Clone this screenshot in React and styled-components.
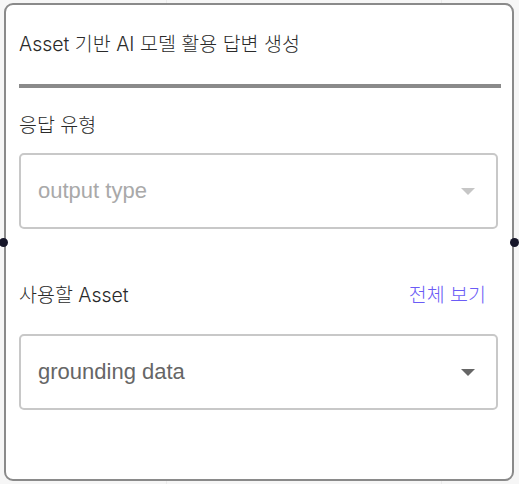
import styled, { createGlobalStyle } from "styled-components"

const GlobalStyle = createGlobalStyle`
    html, body {
        margin: 0;
        padding: 0;
        background-color: #f6f6f6;
    }
    body {
        font-family: Inter, "Noto Sans CJK KR", sans-serif;
        color: #2a2a2a;
    }
`

const Canvas = styled.div`
    width: 519px;
    height: 484px;
    box-sizing: border-box;
    padding: 3px 5px 3px 4px;
    background-image:
        linear-gradient(to right, transparent 166px, #ebebeb 166px, #ebebeb 167px, transparent 167px),
        linear-gradient(to right, transparent 441px, #ebebeb 441px, #ebebeb 442px, transparent 442px);
`

const NodeCard = styled.div`
    position: relative;
    height: 100%;
    box-sizing: border-box;
    background: #fff;
    border: 2px solid #8a8a8a;
    border-radius: 9px;
    padding: 0 14px 0 13px;
    display: flex;
    flex-direction: column;
`

const Handle = styled.span`
    position: absolute;
    top: 233px;
    width: 9px;
    height: 9px;
    border-radius: 50%;
    background: #161629;
    ${p => p.side === "left" ? "left: -7px;" : "right: -7px;"}
`

const Title = styled.div`
    font-size: 19.5px;
    font-weight: 300;
    padding-top: 27px;
    line-height: 24px;
    padding-bottom: 28px;
    border-bottom: 4px solid #8a8a8a;
    margin-right: -3px;
`

const Field = styled.div`
    display: flex;
    flex-direction: column;
    margin-top: ${p => p.top}px;
`

const LabelRow = styled.div`
    display: flex;
    justify-content: space-between;
    align-items: center;
    font-size: 19.5px;
    font-weight: 300;
    line-height: 24px;
`

const LinkText = styled.span`
    color: #6b5cf6;
    margin-right: 12px;
`

const SelectBox = styled.div`
    margin-top: ${p => p.gap}px;
    height: 76px;
    box-sizing: border-box;
    border: 2px solid #c8c8c8;
    border-radius: 5px;
    display: flex;
    align-items: center;
    justify-content: space-between;
    padding: 0 21px 0 17px;
    font-family: "Liberation Sans", Arial, sans-serif;
    font-size: 22px;
    color: ${p => p.placeholder ? "#a9a9a9" : "#666"};
`

const Caret = styled.span`
    width: 0;
    height: 0;
    border-left: 7px solid transparent;
    border-right: 7px solid transparent;
    border-top: 7px solid ${p => p.light ? "#c6c6c6" : "#666"};
`

function App() {
    return (
        <Canvas>
            <GlobalStyle />
            <NodeCard>
                <Handle side="left" />
                <Handle side="right" />
                <Title>Asset 기반 AI 모델 활용 답변 생성</Title>

                <Field top={25}>
                    <LabelRow>
                        <span>응답 유형</span>
                    </LabelRow>
                    <SelectBox gap={16} placeholder="1">
                        <span>output type</span>
                        <Caret light />
                    </SelectBox>
                </Field>

                <Field top={54}>
                    <LabelRow>
                        <span>사용할 Asset</span>
                        <LinkText>전체 보기</LinkText>
                    </LabelRow>
                    <SelectBox gap={27}>
                        <span>grounding data</span>
                        <Caret />
                    </SelectBox>
                </Field>
            </NodeCard>
        </Canvas>
    )
}

export default App
